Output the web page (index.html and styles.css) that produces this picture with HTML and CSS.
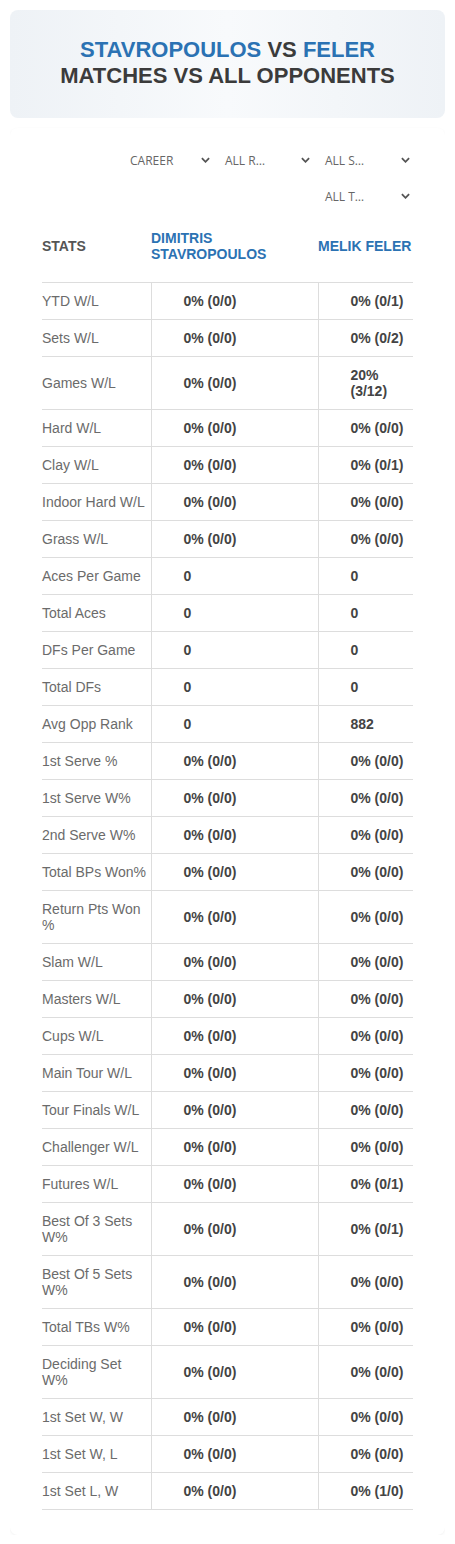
FILE: index.html
```html
<!DOCTYPE html>
<html lang="en">
<head>
    <meta charset="UTF-8">
    <meta name="viewport" content="width=device-width, initial-scale=1.0">
    <title>Stavropoulos vs Feler</title>
    <link rel="stylesheet" href="styles.css">
</head>
<body>

<div class="title-card">
    <h1><span class="player">STAVROPOULOS</span> VS <span class="player">FELER</span><br>MATCHES VS ALL OPPONENTS</h1>
</div>

<div class="stats-card">
    <div class="filters">
        <div class="filter first"><span>CAREER</span><svg viewBox="0 0 10 6"><path d="M1 1l4 4 4-4"/></svg></div>
        <div class="filter"><span>ALL R…</span><svg viewBox="0 0 10 6"><path d="M1 1l4 4 4-4"/></svg></div>
        <div class="filter"><span>ALL S…</span><svg viewBox="0 0 10 6"><path d="M1 1l4 4 4-4"/></svg></div>
        <div class="filter"><span>ALL T…</span><svg viewBox="0 0 10 6"><path d="M1 1l4 4 4-4"/></svg></div>
    </div>

    <table>
        <colgroup>
            <col class="col-label">
            <col class="col-p1">
            <col class="col-p2">
        </colgroup>
        <thead>
            <tr>
                <th class="th-stats">STATS</th>
                <th class="th-player">DIMITRIS<br>STAVROPOULOS</th>
                <th class="th-player">MELIK FELER</th>
            </tr>
        </thead>
        <tbody id="stats-body"></tbody>
    </table>
</div>

<script>
    const rows = [
        ['YTD W/L', '0% (0/0)', '0% (0/1)'],
        ['Sets W/L', '0% (0/0)', '0% (0/2)'],
        ['Games W/L', '0% (0/0)', '20% (3/12)'],
        ['Hard W/L', '0% (0/0)', '0% (0/0)'],
        ['Clay W/L', '0% (0/0)', '0% (0/1)'],
        ['Indoor Hard W/L', '0% (0/0)', '0% (0/0)'],
        ['Grass W/L', '0% (0/0)', '0% (0/0)'],
        ['Aces Per Game', '0', '0'],
        ['Total Aces', '0', '0'],
        ['DFs Per Game', '0', '0'],
        ['Total DFs', '0', '0'],
        ['Avg Opp Rank', '0', '882'],
        ['1st Serve %', '0% (0/0)', '0% (0/0)'],
        ['1st Serve W%', '0% (0/0)', '0% (0/0)'],
        ['2nd Serve W%', '0% (0/0)', '0% (0/0)'],
        ['Total BPs Won%', '0% (0/0)', '0% (0/0)'],
        ['Return Pts Won %', '0% (0/0)', '0% (0/0)'],
        ['Slam W/L', '0% (0/0)', '0% (0/0)'],
        ['Masters W/L', '0% (0/0)', '0% (0/0)'],
        ['Cups W/L', '0% (0/0)', '0% (0/0)'],
        ['Main Tour W/L', '0% (0/0)', '0% (0/0)'],
        ['Tour Finals W/L', '0% (0/0)', '0% (0/0)'],
        ['Challenger W/L', '0% (0/0)', '0% (0/0)'],
        ['Futures W/L', '0% (0/0)', '0% (0/1)'],
        ['Best Of 3 Sets W%', '0% (0/0)', '0% (0/1)'],
        ['Best Of 5 Sets W%', '0% (0/0)', '0% (0/0)'],
        ['Total TBs W%', '0% (0/0)', '0% (0/0)'],
        ['Deciding Set W%', '0% (0/0)', '0% (0/0)'],
        ['1st Set W, W', '0% (0/0)', '0% (0/0)'],
        ['1st Set W, L', '0% (0/0)', '0% (0/0)'],
        ['1st Set L, W', '0% (0/0)', '0% (1/0)']
    ];

    const tbody = document.getElementById('stats-body');
    rows.forEach(r => {
        const tr = document.createElement('tr');
        tr.innerHTML = `
            <td class="label">${r[0]}</td>
            <td class="value">${r[1]}</td>
            <td class="value">${r[2]}</td>
        `;
        tbody.appendChild(tr);
    });
</script>

</body>
</html>
```

FILE: styles.css
```css
body {
    font-family: "Liberation Sans", Arial, sans-serif;
    margin: 10px;
    background-color: #fff;
}
.title-card {
    background: linear-gradient(to right, #eef2f6, #f8fafc 50%, #eef2f6);
    border-radius: 8px;
    padding: 27px 10px 29px;
}
h1 {
    margin: 0;
    text-align: center;
    font-size: 22px;
    line-height: 26px;
    font-weight: bold;
    color: #3b3b3b;
}
.player {
    color: #2b72b3;
}
.stats-card {
    margin-top: 10px;
    padding: 14px 32px 25px;
    border-radius: 8px;
    box-shadow: 0 1px 3px rgba(0, 0, 0, 0.06);
}
.filters {
    display: flex;
    flex-wrap: wrap;
    justify-content: flex-end;
    column-gap: 10px;
}
.filter {
    width: 90px;
    height: 36px;
    display: flex;
    align-items: center;
    justify-content: space-between;
    padding: 0 3px 0 2px;
    box-sizing: border-box;
    font-family: "Open Sans", sans-serif;
    font-size: 12px;
    color: #666;
}
.filter.first {
    padding-left: 7px;
}
.filter svg {
    width: 9px;
    height: 6px;
    fill: none;
    stroke: #555;
    stroke-width: 2;
}
table {
    width: 100%;
    margin-top: 8px;
    border-collapse: collapse;
    table-layout: fixed;
}
.col-label {
    width: 109px;
}
.col-p2 {
    width: 95px;
}
th {
    text-align: left;
    font-size: 14px;
    line-height: 16px;
    padding: 8px 0 20px;
    border-bottom: 1px solid #ddd;
}
.th-stats {
    color: #555;
}
.th-player {
    color: #2b72b3;
}
td {
    font-size: 14px;
    line-height: 16px;
    padding: 10px 0;
    border-bottom: 1px solid #ddd;
    vertical-align: middle;
}
.label {
    color: #6b6b6b;
    padding-right: 4px;
}
.value {
    font-weight: bold;
    color: #444;
    padding-left: 32px;
    padding-right: 4px;
    border-left: 1px solid #ddd;
}
```
